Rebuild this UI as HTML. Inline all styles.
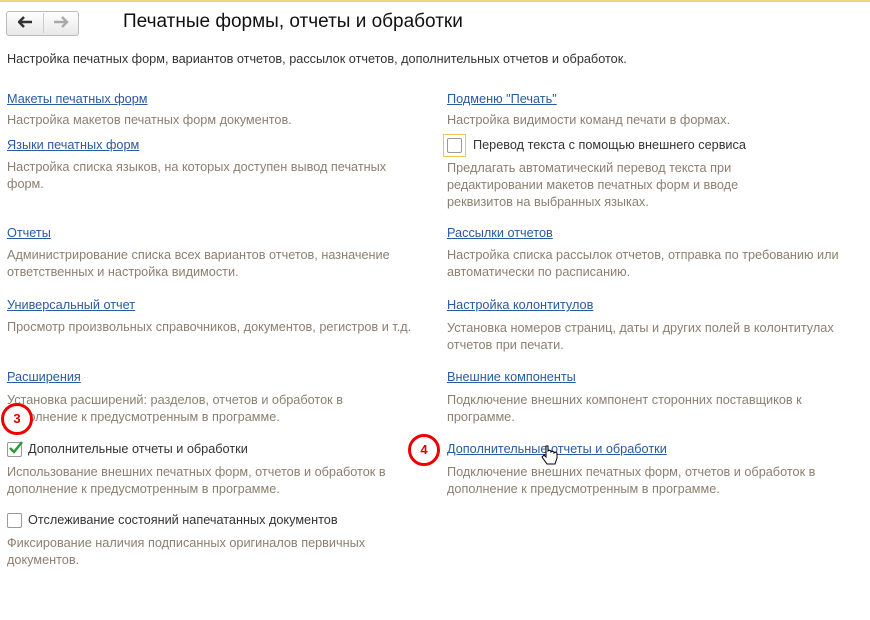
<html><head><style>
body{margin:0;width:870px;height:620px;background:#fff;font-family:"Liberation Sans",Arial,sans-serif;font-size:12.7px;position:relative;overflow:hidden}
.t{position:absolute;white-space:nowrap;line-height:14px}
a,.l{color:#2a5aa0;text-decoration:underline}
.d{color:#8b8070}
.k{color:#333}
.cb{position:absolute;width:13px;height:13px;border:1px solid #999;border-radius:2px;background:#fff}
.c{position:absolute;border:3.5px solid #e00;border-radius:50%;background:#fff;color:#d00;font-weight:bold;font-size:13px;text-align:center}
</style></head><body>
<div style="position:absolute;left:0;top:0;width:870px;height:2px;background:#f0d880"></div>
<div style="position:absolute;left:6px;top:11px;width:71px;height:23px;border:1px solid #bbb;border-radius:3px;background:linear-gradient(#fff,#e8e8e8)"></div>
<div style="position:absolute;left:43px;top:13px;width:1px;height:20px;background:#ccc"></div>
<svg style="position:absolute;left:18px;top:16px" width="16" height="12"><path d="M1 6H14M6 1L1 6L6 11" stroke="#333" stroke-width="2.5" fill="none"/></svg>
<svg style="position:absolute;left:53px;top:16px" width="16" height="12"><path d="M1 6H14M9 1L14 6L9 11" stroke="#aaa" stroke-width="2.5" fill="none"/></svg>
<div class="t" style="left:123px;top:11px;font-size:19px;line-height:22px;color:#111">Печатные формы, отчеты и обработки</div>
<div class="t k" style="left:7px;top:52px">Настройка печатных форм, вариантов отчетов, рассылок отчетов, дополнительных отчетов и обработок.</div>

<div class="t l" style="left:7px;top:92px">Макеты печатных форм</div>
<div class="t d" style="left:7px;top:113px">Настройка макетов печатных форм документов.</div>
<div class="t l" style="left:7px;top:138px">Языки печатных форм</div>
<div class="t d" style="left:7px;top:159px;line-height:17px">Настройка списка языков, на которых доступен вывод печатных<br>форм.</div>
<div class="t l" style="left:7px;top:226px">Отчеты</div>
<div class="t d" style="left:7px;top:247px;line-height:17px">Администрирование списка всех вариантов отчетов, назначение<br>ответственных и настройка видимости.</div>
<div class="t l" style="left:7px;top:298px">Универсальный отчет</div>
<div class="t d" style="left:7px;top:320px">Просмотр произвольных справочников, документов, регистров и т.д.</div>
<div class="t l" style="left:7px;top:370px">Расширения</div>
<div class="t d" style="left:7px;top:392px;line-height:17px">Установка расширений: разделов, отчетов и обработок в<br>дополнение к предусмотренным в программе.</div>
<div class="cb" style="left:7px;top:442px"></div>
<svg style="position:absolute;left:8px;top:440px" width="16" height="16"><path d="M2 8L6 12L14 2" stroke="#2a9a3a" stroke-width="2.5" fill="none"/></svg>
<div class="t k" style="left:28px;top:442px">Дополнительные отчеты и обработки</div>
<div class="t d" style="left:7px;top:464px;line-height:17px">Использование внешних печатных форм, отчетов и обработок в<br>дополнение к предусмотренным в программе.</div>
<div class="cb" style="left:7px;top:513px"></div>
<div class="t k" style="left:28px;top:513px">Отслеживание состояний напечатанных документов</div>
<div class="t d" style="left:7px;top:535px;line-height:17px">Фиксирование наличия подписанных оригиналов первичных<br>документов.</div>

<div class="t l" style="left:447px;top:92px">Подменю "Печать"</div>
<div class="t d" style="left:447px;top:113px">Настройка видимости команд печати в формах.</div>
<div style="position:absolute;left:443px;top:134px;width:21px;height:21px;border:1px solid #e8c850"></div>
<div class="cb" style="left:447px;top:138px"></div>
<div class="t k" style="left:473px;top:138px">Перевод текста с помощью внешнего сервиса</div>
<div class="t d" style="left:447px;top:160px;line-height:17px">Предлагать автоматический перевод текста при<br>редактировании макетов печатных форм и вводе<br>реквизитов на выбранных языках.</div>
<div class="t l" style="left:447px;top:226px">Рассылки отчетов</div>
<div class="t d" style="left:447px;top:247px;line-height:17px">Настройка списка рассылок отчетов, отправка по требованию или<br>автоматически по расписанию.</div>
<div class="t l" style="left:447px;top:298px">Настройка колонтитулов</div>
<div class="t d" style="left:447px;top:320px;line-height:17px">Установка номеров страниц, даты и других полей в колонтитулах<br>отчетов при печати.</div>
<div class="t l" style="left:447px;top:370px">Внешние компоненты</div>
<div class="t d" style="left:447px;top:392px;line-height:17px">Подключение внешних компонент сторонних поставщиков к<br>программе.</div>
<div class="t l" style="left:447px;top:442px">Дополнительные отчеты и обработки</div>
<div class="t d" style="left:447px;top:464px;line-height:17px">Подключение внешних печатных форм, отчетов и обработок в<br>дополнение к предусмотренным в программе.</div>

<div class="c" style="left:1px;top:403px;width:26px;height:26px;line-height:26px">3</div>
<div class="c" style="left:408px;top:434px;width:26px;height:26px;line-height:26px">4</div>
<svg style="position:absolute;left:541px;top:444px" width="18" height="22"><path d="M5 2v11l-2-2-2 2 5 7h8l2-6v-5l-2-1-1 1v-1l-2-1-1 1v-1l-2-1-1 1V2z" fill="#fff" stroke="#000" stroke-width="1"/></svg>
</body></html>
